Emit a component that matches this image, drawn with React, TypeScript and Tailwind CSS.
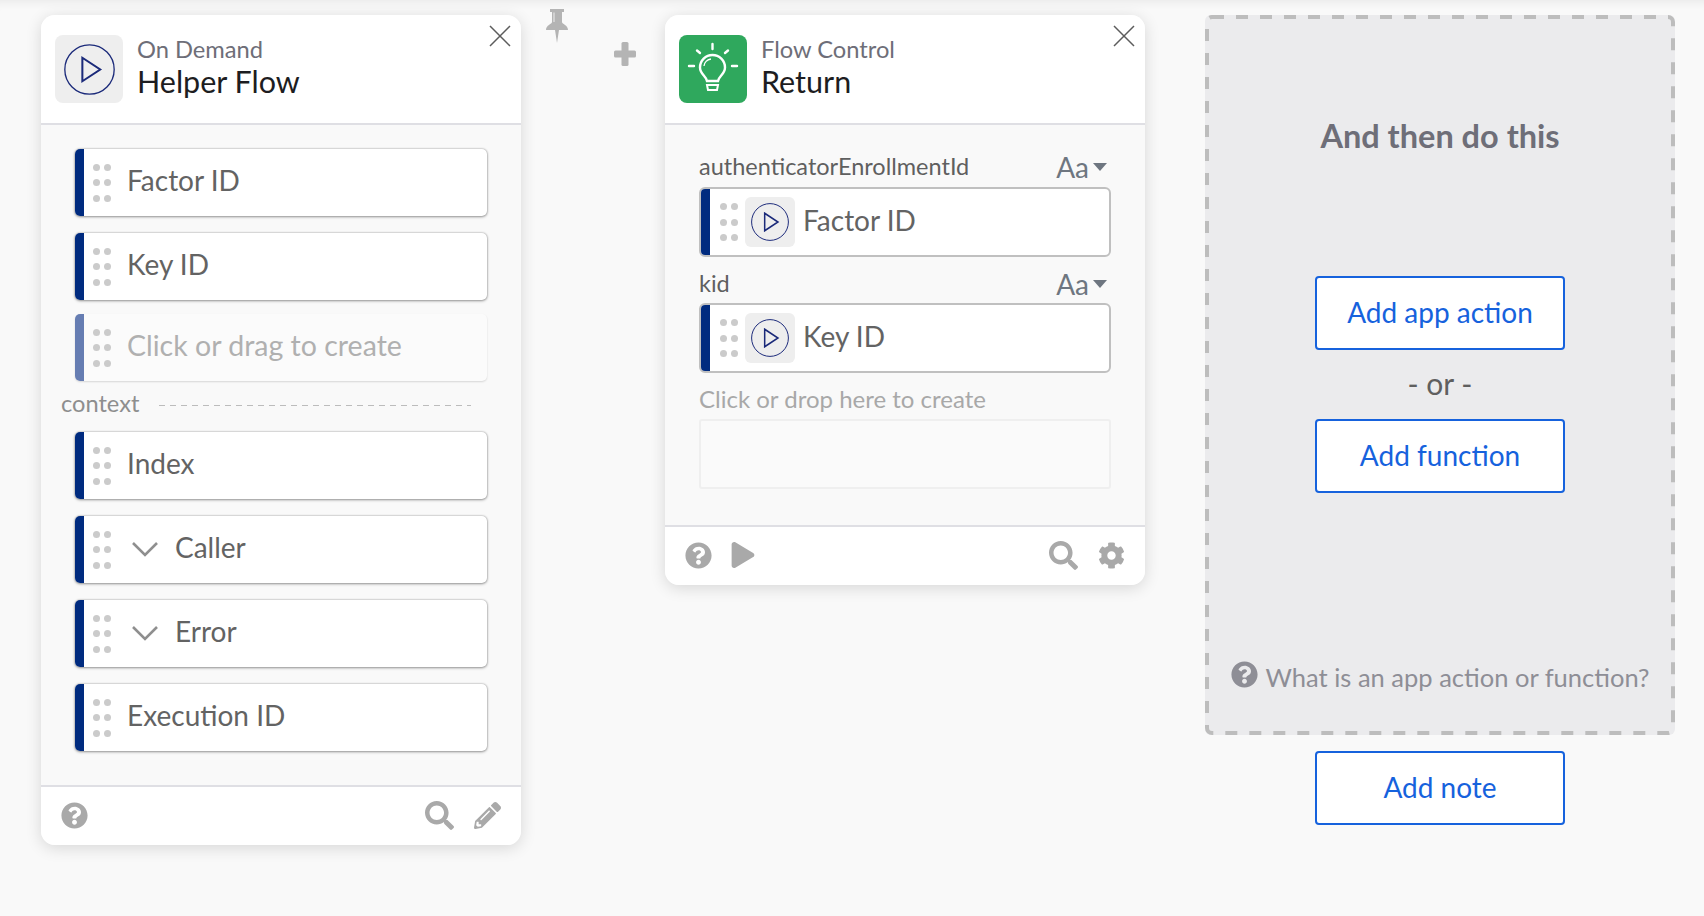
import React from 'react'
import { FaCog, FaPencilAlt, FaPlay, FaQuestionCircle, FaSearch } from 'react-icons/fa'

const font = "font-['Lato','Liberation_Sans',sans-serif]"

const PlayCircle: React.FC<{ size: number }> = ({ size }) => (
  <svg width={size} height={size} viewBox="0 0 50 50" fill="none" stroke="#1b2a7a">
    <circle cx="25" cy="25" r="24.2" strokeWidth="1.3" />
    <path d="M18 13.5 L35.5 25 L18 36.5 Z" strokeWidth="2" />
  </svg>
)

const CloseIcon: React.FC = () => (
  <svg width="22" height="22" viewBox="0 0 22 22" stroke="#5c5c5c" strokeWidth="1.5">
    <path d="M1 1 L21 21 M21 1 L1 21" />
  </svg>
)

const Bulb: React.FC = () => (
  <svg width="68" height="68" viewBox="0 0 68 68" fill="none" stroke="#fff" strokeWidth="2.4">
    <path d="M33.5 9 V14 M18 15.5 L21 18 M49 15.5 L46 18 M10 31 H15 M53 31 H58" strokeLinecap="round" />
    <path d="M28 46 C27 41 21 39 21 32.5 A12.5 12.5 0 0 1 46 32.5 C46 39 40 41 39 46 Z" />
    <path d="M25 31 A8 8 0 0 1 32 24" strokeWidth="1.3" />
    <path d="M28 50 H39 L38 55 H29 Z" strokeWidth="2" />
  </svg>
)

const Pin: React.FC = () => (
  <svg width="22" height="34" viewBox="0 0 22 34" className="shrink-0">
    <path d="M4 0 H18 V3 H16 V13 C16 15 22 16 22 21 H13 L11 34 L9 21 H0 C0 16 6 15 6 13 V3 H4 Z" fill="#b4b4b4" />
    <path d="M8 3.5 V13" stroke="#e4e4e4" strokeWidth="1.2" />
  </svg>
)

const Plus: React.FC = () => (
  <svg width="22" height="24" viewBox="0 0 22 24" fill="#b4b4b4" className="shrink-0">
    <rect x="7.5" y="0" width="7" height="24" rx="1.5" />
    <rect x="0" y="8.5" width="22" height="7" rx="1.5" />
  </svg>
)

const Dots: React.FC = () => (
  <div className="grid grid-cols-2 gap-x-[4px] gap-y-[8.5px] shrink-0">
    {[0, 1, 2, 3, 4, 5].map((i) => (
      <span key={i} className="w-[7px] h-[7px] rounded-full bg-[#cbcbcb]" />
    ))}
  </div>
)

const Chevron: React.FC = () => (
  <svg width="26" height="15" viewBox="0 0 26 15" fill="none" stroke="#8f8f8f" strokeWidth="2.6" className="shrink-0">
    <path d="M1 1 L13 13 L25 1" />
  </svg>
)

const OutputRow: React.FC<{ label: string; chevron?: boolean }> = ({ label, chevron }) => (
  <div className="flex h-[67px] rounded-[5px] overflow-hidden bg-white shadow-[0_0_2px_rgba(0,0,0,0.35),0_1px_3px_rgba(0,0,0,0.35)]">
    <div className="w-[9px] bg-[#002b7f]" />
    <div className="flex items-center pl-[9px]">
      <Dots />
      {chevron ? (
        <div className="flex items-center ml-[21px] gap-[17px]">
          <Chevron />
          <span className="text-[28px] text-[#636363] leading-none -mt-[5px]">{label}</span>
        </div>
      ) : (
        <span className="ml-[16px] text-[28px] text-[#636363] leading-none -mt-[5px]">{label}</span>
      )}
    </div>
  </div>
)

const CreateRow: React.FC = () => (
  <div className="flex h-[67px] mt-[14px] rounded-[5px] overflow-hidden bg-[#fbfbfb] shadow-[0_1px_2px_rgba(0,0,0,0.14)]">
    <div className="w-[9px] bg-[#667db2]" />
    <div className="flex items-center pl-[9px]">
      <Dots />
      <span className="ml-[16px] text-[28.5px] text-[#b0b0b0] leading-none -mt-[4px]">Click or drag to create</span>
    </div>
  </div>
)

const InputRow: React.FC<{ label: string }> = ({ label }) => (
  <div className="flex h-[70px] rounded-[6px] overflow-hidden bg-white border-[2px] border-[#c0c0c0]">
    <div className="w-[9px] bg-[#002b7f]" />
    <div className="flex items-center pl-[10px]">
      <Dots />
      <div className="ml-[7px] w-[50px] h-[50px] rounded-[6px] bg-[#eeeeee] flex items-center justify-center">
        <PlayCircle size={38} />
      </div>
      <span className="ml-[8px] text-[28px] text-[#636363] leading-none -mt-1">{label}</span>
    </div>
  </div>
)

const FieldLabel: React.FC<{ label: string }> = ({ label }) => (
  <div className="flex items-center justify-between h-[24px] pr-[4px]">
    <span className="text-[23.5px] text-[#5f5f5f]">{label}</span>
    <span className="flex items-center gap-[4px] text-[#6e7680] -mt-[1px]">
      <span className="text-[28px] leading-none">Aa</span>
      <span className="w-0 h-0 border-x-[7px] border-x-transparent border-t-[8px] border-t-[#6e7680]" />
    </span>
  </div>
)

const CardHeader: React.FC<{ category: string; title: string; icon: React.ReactNode; iconBg: string }> = ({
  category,
  title,
  icon,
  iconBg,
}) => (
  <div className="relative h-[110px] bg-white border-b-[2px] border-[#dfdfe4] flex items-start pl-[14px] pt-[20px]">
    <div className={`w-[68px] h-[68px] rounded-[8px] flex items-center justify-center ${iconBg}`}>{icon}</div>
    <div className="ml-[14px] flex flex-col -mt-[1px]">
      <span className="text-[23.7px] leading-[30px] text-[#6e6e78]">{category}</span>
      <span className="text-[30.5px] leading-[35px] text-[#1d1d21]">{title}</span>
    </div>
    <div className="absolute right-[10px] top-[10px]">
      <CloseIcon />
    </div>
  </div>
)

const OutlineButton: React.FC<{ label: string }> = ({ label }) => (
  <button className="w-[250px] h-[74px] pb-[3px] rounded-[4px] bg-white border-[2px] border-[#1662dd] text-[#1662dd] text-[28px]">
    {label}
  </button>
)

const App: React.FC = () => {
  return (
    <div
      className={`${font} w-full h-[916px] overflow-hidden bg-[#f9f9f9] shadow-[inset_0_10px_10px_-8px_rgba(0,0,0,0.07)] flex items-start pl-[41px] pt-[15px]`}
    >
      {/* On Demand card */}
      <div className="w-[480px] h-[830px] rounded-[14px] overflow-hidden bg-[#f9f9f9] shadow-[0_3px_16px_rgba(0,0,0,0.14)] flex flex-col shrink-0">
        <CardHeader category="On Demand" title="Helper Flow" iconBg="bg-[#eeeeee]" icon={<PlayCircle size={51} />} />
        <div className="flex-1 px-[34px] pt-[24px]">
          <div className="flex flex-col gap-[17px]">
            <OutputRow label="Factor ID" />
            <OutputRow label="Key ID" />
          </div>
          <CreateRow />
          <div className="h-[51px] flex items-center -mx-[14px]">
            <span className="text-[23.6px] leading-none text-[#8e8e8e] -mt-[6px]">context</span>
            <div className="ml-[20px] w-[312px] h-px -mt-[2px] bg-[repeating-linear-gradient(90deg,#bcbcbc_0_6px,transparent_6px_11px)]" />
          </div>
          <div className="flex flex-col gap-[17px]">
            <OutputRow label="Index" />
            <OutputRow label="Caller" chevron />
            <OutputRow label="Error" chevron />
            <OutputRow label="Execution ID" />
          </div>
        </div>
        <div className="h-[60px] pb-[2px] bg-white border-t-[2px] border-[#dfdfe4] flex items-center px-[20px] text-[#a9a9a9]">
          <FaQuestionCircle size={27} />
          <div className="ml-auto flex items-center gap-[20px]">
            <FaSearch size={29} />
            <FaPencilAlt size={27} />
          </div>
        </div>
      </div>

      {/* Connector between cards */}
      <div className="w-[144px] flex items-start shrink-0">
        <div className="ml-[25px] -mt-[6px]">
          <Pin />
        </div>
        <div className="ml-[46px] mt-[27px]">
          <Plus />
        </div>
      </div>

      {/* Flow Control card */}
      <div className="w-[480px] h-[570px] rounded-[14px] overflow-hidden bg-[#f9f9f9] shadow-[0_3px_16px_rgba(0,0,0,0.14)] flex flex-col shrink-0">
        <CardHeader category="Flow Control" title="Return" iconBg="bg-[#2fa85d]" icon={<Bulb />} />
        <div className="flex-1 px-[34px] pt-[30px]">
          <FieldLabel label="authenticatorEnrollmentId" />
          <div className="mt-[8px]">
            <InputRow label="Factor ID" />
          </div>
          <div className="mt-[15px]">
            <FieldLabel label="kid" />
          </div>
          <div className="mt-[7px]">
            <InputRow label="Key ID" />
          </div>
          <div className="mt-[14px] h-[24px] flex items-center text-[24px] text-[#a8a8a8]">Click or drop here to create</div>
          <div className="mt-[8px] h-[70px] rounded-[3px] border-[2px] border-[#efefef] bg-[#fafafa]" />
        </div>
        <div className="h-[60px] pb-[2px] bg-white border-t-[2px] border-[#dfdfe4] flex items-center px-[20px] text-[#a9a9a9]">
          <FaQuestionCircle size={27} />
          <FaPlay size={26} className="ml-[18px]" />
          <div className="ml-auto flex items-center gap-[20px]">
            <FaSearch size={29} />
            <FaCog size={27} />
          </div>
        </div>
      </div>

      {/* Next step */}
      <div className="ml-[60px] w-[470px] flex flex-col items-center shrink-0">
        <div className="relative w-full h-[720px] bg-[#ebebed] rounded-[6px] flex flex-col items-center">
          <svg className="absolute inset-0 w-full h-full pointer-events-none" fill="none">
            <rect x="2" y="2" width="466" height="716" rx="5" stroke="#bdbdbd" strokeWidth="4" strokeDasharray="12 12" />
          </svg>
          <h2 className="mt-[101px] h-[40px] leading-[40px] text-[32.5px] font-bold text-[#6e6e78]">And then do this</h2>
          <div className="mt-[120px]">
            <OutlineButton label="Add app action" />
          </div>
          <div className="mt-[15px] h-[36px] leading-[36px] text-[30px] text-[#5f5f5f]">- or -</div>
          <div className="mt-[18px]">
            <OutlineButton label="Add function" />
          </div>
          <div className="mt-[168px] flex items-center gap-[8px] text-[#8e8e96]">
            <FaQuestionCircle size={27} className="-mt-[6px]" />
            <span className="text-[25.5px] leading-[32px]">What is an app action or function?</span>
          </div>
        </div>
        <div className="mt-[16px]">
          <OutlineButton label="Add note" />
        </div>
      </div>
    </div>
  )
}

export default App
